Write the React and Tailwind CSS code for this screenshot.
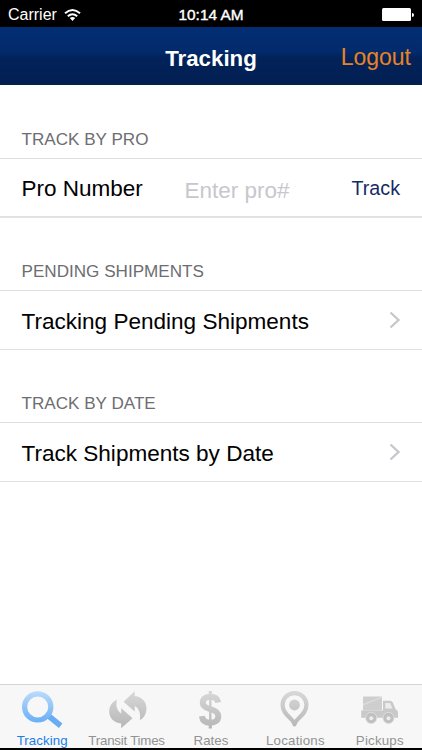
const Chevron = () => (
  <svg className="h-[18px] w-3" viewBox="0 0 12 18" fill="none" stroke="#c7c7cc" strokeWidth="2.3">
    <path d="M1.500 1.500 9.500 9 1.500 16.500" />
  </svg>
);

const SectionTitle = ({ children }) => (
  <h2 className="flex h-[73px] items-end border-b border-[#dedee0] pl-[21.5px] pb-[7px] text-[17.1px] leading-[22px] text-[#6d6d72]">
    {children}
  </h2>
);

const Row = ({ children }) => (
  <button className="flex h-[59px] w-full items-center justify-between border-b border-[#e2e2e4] pr-[21px] pl-[21.5px] text-left text-[22.55px] leading-7">
    <span className="pt-1">{children}</span>
    <Chevron />
  </button>
);

const SearchIcon = () => (
  <svg className="h-10 w-11" viewBox="0 0 44 40" fill="none">
    <defs>
      <linearGradient id="blue" gradientUnits="userSpaceOnUse" x1="0" y1="1" x2="0" y2="37">
        <stop stopColor="#bcdcfb" />
        <stop offset="1" stopColor="#5ea8f4" />
      </linearGradient>
    </defs>
    <path d="M28 25.500 38.500 34" stroke="#68adf4" strokeWidth="5.600" strokeLinecap="square" />
    <circle cx="17.700" cy="16.900" r="13.100" stroke="url(#blue)" strokeWidth="5.200" />
  </svg>
);

const TransitIcon = () => (
  <svg className="h-10 w-11" viewBox="0 0 44 40">
    <defs>
      <linearGradient id="grayFill" gradientUnits="userSpaceOnUse" x1="0" y1="1" x2="0" y2="39">
        <stop stopColor="#d8d8d8" />
        <stop offset="1" stopColor="#b6b6b6" />
      </linearGradient>
    </defs>
    <path d="M12 9.800C1 14 1 32 16.200 33.500V38.300L27.500 28.300 16.200 18V23.500C12 21 10.500 15 12 9.800Z" fill="url(#grayFill)" />
    <path d="M34.700 30.300C44 26 45 8 29.700 6V1.300L18.500 11.800 29.700 21.500V16C34.500 18.500 36 25 34.700 30.300Z" fill="url(#grayFill)" />
  </svg>
);

const DollarIcon = () => (
  <svg className="h-10 w-11" viewBox="0 0 44 40" fill="none" stroke="url(#grayFill)">
    <path d="M21.300 5V1M21.300 34v4.500" strokeWidth="3.200" />
    <path d="M29.200 12.500C28.500 8.300 25.800 6.700 21.300 6.700c-4.700 0-7.500 2.300-7.500 6 0 3.800 2.900 5.100 7.500 6.400 5.300 1.500 8 3 8 7.100 0 4-3 6.500-8 6.500-5.100 0-7.900-2.300-8.400-6.600" strokeWidth="6" />
    <path d="M21.300 7v25" strokeWidth="2.400" />
  </svg>
);

const PinIcon = () => (
  <svg className="h-10 w-11" viewBox="0 0 44 40" fill="none">
    <path d="M21.500 34.500C20.500 28 9.600 25.500 9.600 15a11.900 11.900 0 0 1 23.800 0C33.400 25.500 22.500 28 21.500 34.500Z" stroke="url(#grayFill)" strokeWidth="4.200" strokeLinejoin="round" />
    <circle cx="21.500" cy="15" r="5.400" fill="url(#grayFill)" />
  </svg>
);

const TruckIcon = () => (
  <svg className="h-10 w-11" viewBox="0 0 44 40">
    <path d="M5 6.500h19v14H5Z" fill="#cecece" />
    <path d="M5 14 24 6.500v1.200L5 15.500Z" fill="#dedede" />
    <path d="M25 10.700h7q2 0 2.800 1.800l2.800 6.700q2.400.8 2.400 3v5.500H3.200V20.500H25Z" fill="#c9c9c9" />
    <path d="M27.300 13h4.700l2.500 5.500h-7.200Z" fill="#ececec" />
    <g fill="#c0c0c0" stroke="#e2e2e2" strokeWidth="0.800">
      <circle cx="13.200" cy="28" r="5.600" />
      <circle cx="30.500" cy="28" r="5.600" />
    </g>
    <circle cx="13.200" cy="28.200" r="2" fill="#ececec" />
    <circle cx="30.500" cy="28.200" r="2" fill="#ececec" />
  </svg>
);

const tabs = [
  { name: "Tracking", Icon: SearchIcon, style: "text-[#1b7ee8] tracking-[0.08px]" },
  { name: "Transit Times", Icon: TransitIcon, style: "text-[#929292] tracking-[-0.22px]" },
  { name: "Rates", Icon: DollarIcon, style: "text-[#929292]" },
  { name: "Locations", Icon: PinIcon, style: "text-[#929292] tracking-[0.2px]" },
  { name: "Pickups", Icon: TruckIcon, style: "text-[#929292] tracking-[0.2px]" },
];

export default function App() {
  return (
    <div className="flex h-[750px] w-[422px] flex-col overflow-hidden bg-white font-['Liberation_Sans',Arial,sans-serif] text-black">
      <div className="grid h-[27px] shrink-0 grid-cols-[1fr_auto_1fr] items-center bg-black pr-2 pl-2 text-white">
        <div className="flex items-center gap-[7px] pt-[3px] text-[16px] leading-5">
          Carrier
          <svg className="h-3 w-[17px]" viewBox="0 0 17 12" fill="none" stroke="white" strokeWidth="2">
            <path d="M1 4.300Q8.500-2.200 16 4.300M3.800 7.300Q8.500 3.300 13.200 7.300" />
            <path d="m8.500 12-2.700-2.900q2.700-2.100 5.400 0Z" fill="white" stroke="none" />
          </svg>
        </div>
        <div className="pt-[3px] text-[15.4px] leading-5 [-webkit-text-stroke:0.4px_white]">10:14 AM</div>
        <div className="flex items-center justify-end gap-px pt-[2px]">
          <div className="h-[13px] w-[29px] rounded-[1.5px] bg-white" />
          <div className="h-1 w-[2px] rounded-r-full bg-white" />
        </div>
      </div>

      <header className="grid h-[58px] shrink-0 grid-cols-[1fr_auto_1fr] items-center bg-[linear-gradient(#022e74_0%,#022b6c_42%,#022259_54%,#021f52_100%)]">
        <span />
        <h1 className="pt-[6px] text-[22.3px] leading-7 font-bold text-white">Tracking</h1>
        <button className="justify-self-end pt-[2px] pr-[11px] text-[23px] leading-7 text-[#e98326]">Logout</button>
      </header>

      <main className="flex-1">
        <section className="mt-px">
          <SectionTitle>TRACK BY PRO</SectionTitle>
          <div className="flex h-[59px] items-center border-b-2 border-[#e2e2e4] pl-[21.5px]">
            <label htmlFor="pro" className="w-[163px] pt-[3px] text-[22.5px] leading-7">Pro Number</label>
            <input id="pro" placeholder="Enter pro#" className="w-[167px] pt-[7px] text-[22.5px] leading-7 outline-none placeholder:text-[#c7c7cc]" />
            <button className="text-[19.7px] leading-6 text-[#132c63]">Track</button>
          </div>
        </section>
        <section>
          <SectionTitle>PENDING SHIPMENTS</SectionTitle>
          <Row>Tracking Pending Shipments</Row>
        </section>
        <section>
          <SectionTitle>TRACK BY DATE</SectionTitle>
          <Row>Track Shipments by Date</Row>
        </section>
      </main>

      <nav className="grid h-[66px] shrink-0 grid-cols-5 border-t border-b-2 border-t-[#d5d5d5] border-b-black bg-[#f7f7f7]">
        {tabs.map(({ name, Icon, style }) => (
          <button key={name} className={"flex flex-col items-center pt-[5px] text-[13.3px] leading-4 whitespace-nowrap " + style}>
            <Icon />
            <span className="mt-[3px]">{name}</span>
          </button>
        ))}
      </nav>
    </div>
  );
}
